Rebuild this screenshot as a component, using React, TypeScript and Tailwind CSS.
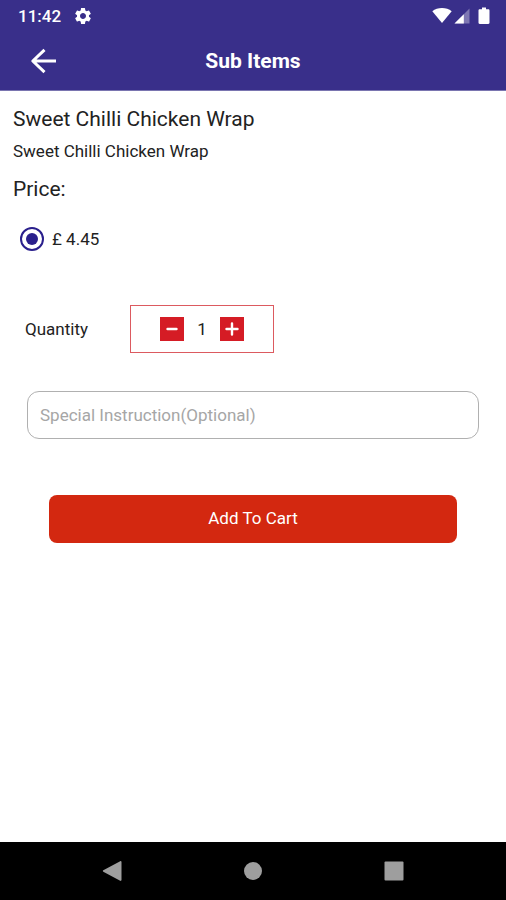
import { useState } from "react";
import { MdSettings } from "react-icons/md";

const StatusBar = () => {
  return (
    <div className="flex h-8 items-center justify-between pl-[18px] pr-4">
      <div className="flex items-center gap-3">
        <span className="text-[17px] font-medium leading-8">11:42</span>
        <MdSettings size={20} />
      </div>
      <div className="flex items-center">
        <svg width="20" height="16" viewBox="0 0 20 16" fill="currentColor" className="mr-0.5">
          <path d="M10 15 0.3 3.2C3 1.1 6.3 0 10 0s7 1.1 9.7 3.2z" />
        </svg>
        <svg width="16" height="16" viewBox="0 0 16 16" fill="currentColor" className="mr-2">
          <path d="M.5 15.5 15.5.5v15z" opacity=".35" />
          <path d="M.5 15.5 9.8 6.2v9.3z" />
        </svg>
        <svg width="12" height="18" viewBox="0 0 12 18" fill="currentColor">
          <path d="M4 .5h4v1.7h2.3c.7 0 1.2.5 1.2 1.2v12.4c0 .7-.5 1.2-1.2 1.2H1.7c-.7 0-1.2-.5-1.2-1.2V3.4c0-.7.5-1.2 1.2-1.2H4z" />
        </svg>
      </div>
    </div>
  );
};

const Header = () => {
  return (
    <header className="border-b border-[#7a75b0] bg-[#392f8a] text-white">
      <StatusBar />
      <div className="grid h-[58px] grid-cols-[1fr_auto_1fr] items-center px-[30px]">
        <button type="button" aria-label="Back" className="justify-self-start">
          <svg
            width="27"
            height="26"
            viewBox="0 0 27 26"
            fill="none"
            stroke="currentColor"
            strokeWidth="3"
            strokeLinejoin="round"
          >
            <path d="M26 13H3M14.5 1.8 2.8 13l11.7 11.2" />
          </svg>
        </button>
        <h1 className="text-[21px] font-bold leading-7">Sub Items</h1>
      </div>
    </header>
  );
};

const Quantity = () => {
  const [count, setCount] = useState(1);

  return (
    <div className="mt-[54px] flex items-center gap-10 px-3">
      <span className="w-[65px] text-[17px] leading-6">Quantity</span>
      <div className="flex h-12 w-36 items-center justify-center gap-3 border border-[#dc5a60]">
        <button
          type="button"
          aria-label="Decrease quantity"
          className="flex size-6 items-center justify-center bg-[#d51c25] text-white"
          onClick={() => setCount(Math.max(1, count - 1))}
        >
          <svg width="14" height="14" viewBox="0 0 14 14" stroke="currentColor" strokeWidth="2.4" strokeLinecap="round">
            <path d="M2.5 7h9" />
          </svg>
        </button>
        <output className="min-w-3 text-center text-[17px] leading-6">{count}</output>
        <button
          type="button"
          aria-label="Increase quantity"
          className="flex size-6 items-center justify-center bg-[#d51c25] text-white"
          onClick={() => setCount(count + 1)}
        >
          <svg width="14" height="14" viewBox="0 0 14 14" stroke="currentColor" strokeWidth="2.4" strokeLinecap="round">
            <path d="M1.5 7h11M7 1.5v11" />
          </svg>
        </button>
      </div>
    </div>
  );
};

const NavigationBar = () => {
  return (
    <nav className="flex h-[58px] items-center justify-around bg-black px-[42px] text-[#9e9e9e]">
      <button type="button" aria-label="System back">
        <svg width="22" height="22" viewBox="0 0 22 22" fill="currentColor">
          <path d="M19.2 1.2c.6-.4 1.3 0 1.3.7v18.2c0 .7-.7 1.1-1.3.7L2.3 11.7c-.6-.4-.6-1 0-1.4z" />
        </svg>
      </button>
      <button type="button" aria-label="Home">
        <svg width="22" height="22" viewBox="0 0 22 22" fill="currentColor">
          <circle cx="11" cy="11" r="9" />
        </svg>
      </button>
      <button type="button" aria-label="Recent apps">
        <svg width="22" height="22" viewBox="0 0 22 22" fill="currentColor">
          <rect x="1.5" y="1.5" width="19" height="19" rx="1" />
        </svg>
      </button>
    </nav>
  );
};

export default function App() {
  return (
    <div className="flex min-h-screen flex-col bg-white font-[Roboto,sans-serif] text-[#222222]">
      <Header />
      <main className="grow px-[13px] pt-[14px]">
        <h2 className="text-[21px] leading-7">Sweet Chilli Chicken Wrap</h2>
        <p className="mt-1.5 text-[17px] leading-6">Sweet Chilli Chicken Wrap</p>
        <h3 className="mt-3 text-[21px] leading-7">Price:</h3>
        <label className="mt-6 flex w-fit items-center gap-2 pl-[7px] text-[17px] leading-6">
          <input
            type="radio"
            name="price"
            defaultChecked
            className="size-6 appearance-none rounded-full border-2 border-[#2a1f8c] bg-white bg-clip-content p-1 checked:bg-[#2a1f8c]"
          />
          £ 4.45
        </label>
        <Quantity />
        <div className="mt-[38px] px-[14px]">
          <input
            type="text"
            aria-label="Special Instruction(Optional)"
            placeholder="Special Instruction(Optional)"
            className="h-12 w-full rounded-xl border border-[#b0b0b0] px-3 text-[17px] placeholder:text-[#a6a6a6]"
          />
        </div>
        <div className="mt-14 px-9">
          <button type="button" className="h-12 w-full rounded-lg bg-[#d32810] text-[17px] text-white">
            Add To Cart
          </button>
        </div>
      </main>
      <NavigationBar />
    </div>
  );
}
